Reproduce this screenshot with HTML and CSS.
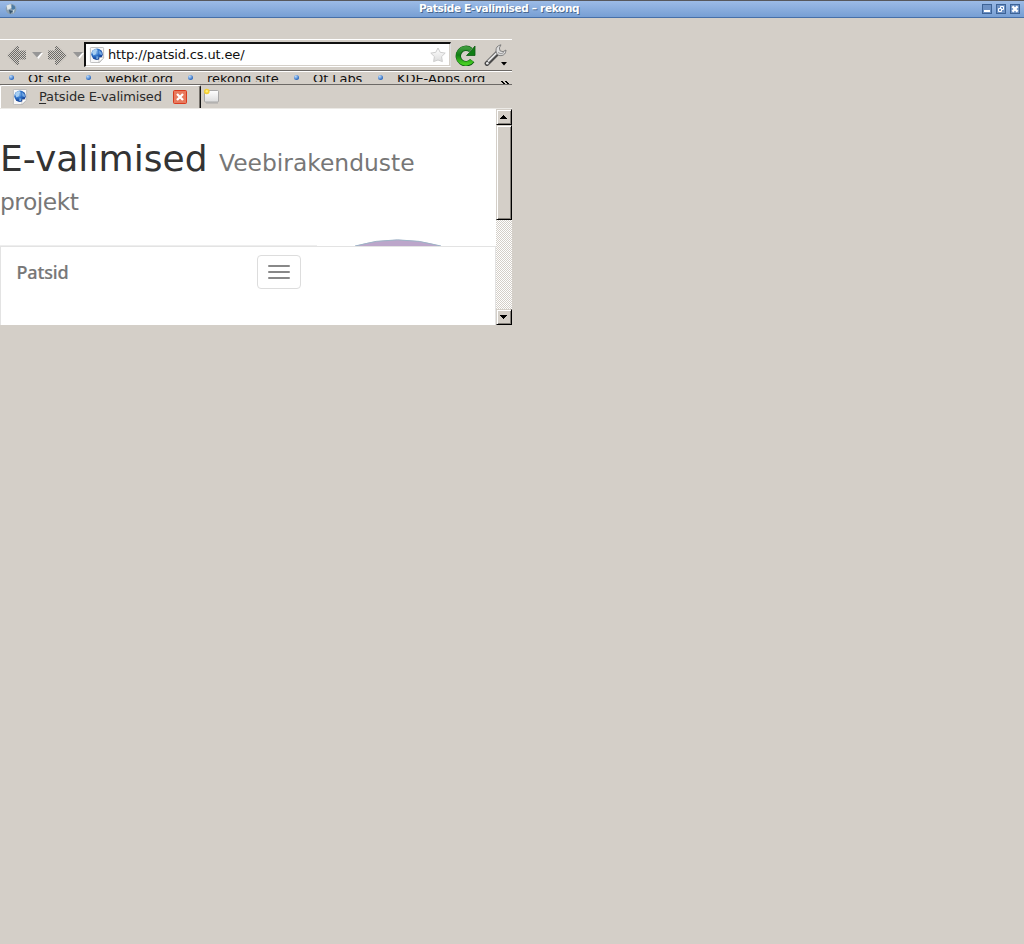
FILE: index.html
```
<!DOCTYPE html>
<html lang="et">
<head>
<meta charset="utf-8">
<title>Patside E-valimised – rekonq</title>
<link rel="stylesheet" href="styles.css">
</head>
<body>
<svg class="defs" width="0" height="0" aria-hidden="true">
  <defs>
    <pattern id="dots" width="2" height="2" patternUnits="userSpaceOnUse"><rect width="2" height="2" fill="#d4cfc8"/><rect width="1" height="1" fill="#6a6a68"/><rect x="1" y="1" width="1" height="1" fill="#6a6a68"/></pattern>
    <radialGradient id="ball" cx=".35" cy=".3" r=".75"><stop offset="0" stop-color="#a9d0f5"/><stop offset=".45" stop-color="#2f73c9"/><stop offset="1" stop-color="#082f86"/></radialGradient>
    <linearGradient id="green" x2="0" y2="1"><stop offset="0" stop-color="#3c9a3c"/><stop offset=".45" stop-color="#0f7c14"/><stop offset="1" stop-color="#45cc22"/></linearGradient>
    <linearGradient id="paper" x2="0" y2="1"><stop offset="0" stop-color="#fff"/><stop offset="1" stop-color="#dcdcdc"/></linearGradient>
    <symbol id="globe" viewBox="0 0 16 16">
      <path d="M2.2.5h11.6a.8.8 0 0 1 .8.8V11l-4 4.5H2.2a.8.8 0 0 1-.8-.8V1.3a.8.8 0 0 1 .8-.8z" fill="#f8f8f8" stroke="#b4b4b4" stroke-width=".8"/>
      <circle cx="8" cy="7.3" r="5.7" fill="url(#ball)"/>
      <path d="M3 5.2Q4 2.3 7.2 2L8.5 3.5 6.8 5 7 7 4.5 8.5z" fill="#a8cff2"/><path d="M10 3.2l2.7 2.4.3 2.6-2.6-.9z" fill="#74aae4"/><path d="M7.5 9l2 .8-.8 2.7-1.5-.6z" fill="#73a9dd"/>
      <path d="M9.6 15.5l.8-5 4.2-.2v.7z" fill="#fff" stroke="#aaa" stroke-width=".5"/>
    </symbol>
    <symbol id="arrow" viewBox="0 0 20 19"><path d="M0 9.5L9.5 0H12v4.5h7v9h-7V19H9.5z" fill="url(#dots)"/></symbol>
  </defs>
</svg>
<header class="titlebar">
  <svg class="app-icon" width="12" height="12" viewBox="0 0 12 12"><circle cx="6" cy="6" r="5.3" fill="#8ba0b2"/><path d="M1.5 2.5l4-1.5 1 4-4 2z" fill="#dfe6e8"/><path d="M7 1.5l3 2v4L6.500 6z" fill="#4b7ba5"/><path d="M4 7l4 1-3 3z" fill="#35556f"/><path d="M8 7l2-1-2 5z" fill="#c7d9df"/></svg>
  <h1 class="title">Patside E-valimised – rekonq</h1>
  <div class="controls">
    <svg width="10" height="10" viewBox="0 0 10 10"><rect x=".5" y=".5" width="9" height="9" fill="#6d91c4" stroke="#3d6396"/><path d="M2 7h6" stroke="#fff" stroke-width="2"/></svg>
    <svg width="10" height="10" viewBox="0 0 10 10"><rect x=".5" y=".5" width="9" height="9" fill="#6d91c4" stroke="#3d6396"/><path d="M4.5 4V2.5h3v3H6M2.5 4.5h3v3h-3z" fill="none" stroke="#fff"/></svg>
    <svg width="10" height="10" viewBox="0 0 10 10"><rect x=".5" y=".5" width="9" height="9" fill="#6d91c4" stroke="#3d6396"/><path d="M2.4 2.4l5.2 5.2M7.6 2.4L2.4 7.6" stroke="#fff" stroke-width="2.2"/></svg>
  </div>
</header>
<div class="window">
  <div class="menu-space"></div>
  <div class="toolbar">
    <svg class="nav-arrow" width="20" height="19"><use href="#arrow"/></svg>
    <svg class="drop" width="11" height="7"><path d="M2 1h9L6.5 7z" fill="#fff"/><path d="M0 0h10L5 5.5z" fill="#969696"/></svg>
    <svg class="nav-arrow forward" width="20" height="19"><use href="#arrow"/></svg>
    <svg class="drop last" width="11" height="7"><path d="M2 1h9L6.5 7z" fill="#fff"/><path d="M0 0h10L5 5.5z" fill="#969696"/></svg>
    <div class="address">
      <svg width="16" height="16"><use href="#globe"/></svg>
      <span class="url">http://patsid.cs.ut.ee/</span>
      <svg class="star" width="16" height="16" viewBox="0 0 16 16"><path d="M8 1l2.2 4.3 5 .8-3.6 3.5.8 5L8 13l-4.4 1.6.8-5L.8 6.1l5-.8z" fill="url(#paper)" stroke="#c8c8c8" stroke-width=".9" stroke-linejoin="round"/></svg>
    </div>
    <svg class="reload" width="21" height="21" viewBox="0 0 21 21"><path d="M17.200 15.600A7.700 7.700 0 1 1 15.800 5" fill="none" stroke="#0c5a13" stroke-width="5.400"/><path d="M20 1v9.500h-8.500l3-3z" fill="#0f7c14" stroke="#0c5a13" stroke-width=".8"/><path d="M17 15.400A7.700 7.700 0 1 1 15.800 5" fill="none" stroke="url(#green)" stroke-width="4.200"/></svg>
    <svg class="wrench" width="24" height="24" viewBox="0 0 24 24"><path d="M3 19.5L13.5 9" stroke="#4a4a4a" stroke-width="4.8" stroke-linecap="round"/><path d="M4 17.5L14 7.6" stroke="#e4e4e4" stroke-width="2"/><path d="M17 .8q-5.500 1.200-5 6.200.5 4.700 5 4.700 4.800-.5 5-5.700l-3 1.700-3-.9-.6-2.900z" fill="#dedede" stroke="#777" stroke-width=".9"/><path d="M14 8.500q3 2.700 6 0" fill="none" stroke="#999"/><circle cx="3.300" cy="19.200" r="1.300" fill="#eee"/><path d="M17 18h6l-3 3.500z" fill="#000"/></svg>
  </div>
  <nav class="bookmarks">
    <span class="bookmark b1"><i></i><b>Qt site</b></span>
    <span class="bookmark b2"><i></i><b>webkit.org</b></span>
    <span class="bookmark b3"><i></i><b>rekonq site</b></span>
    <span class="bookmark b4"><i></i><b>Qt Labs</b></span>
    <span class="bookmark b5"><i></i><b>KDE-Apps.org</b></span>
    <svg class="more" width="9" height="4" viewBox="0 0 9 4" shape-rendering="crispEdges"><path d="M0 0h2v1h1v1h1v1H2V2H1V1H0zM4 0h2v1h1v1h1v1H6V2H5V1H4z"/></svg>
  </nav>
  <div class="tabs">
    <div class="tab">
      <svg width="16" height="16"><use href="#globe"/></svg>
      <span class="tab-label"><u>P</u>atside E-valimised</span>
      <svg class="close" width="14" height="14" viewBox="0 0 14 14"><rect x=".5" y=".5" width="13" height="13" rx="1" fill="#e87a5d" stroke="#d9391d"/><path d="M4 4l6 6M10 4l-6 6" stroke="#fff" stroke-width="2.3"/></svg>
    </div>
    <svg class="new-tab" width="18" height="17" viewBox="0 0 18 17"><rect x="1.5" y="2.5" width="14" height="11.5" rx="1" fill="url(#paper)" stroke="#999" stroke-width=".8"/><path d="M3 15h12" stroke="#aaa"/><circle cx="3.8" cy="3.5" r="2.8" fill="#f5cf32"/><circle cx="3.8" cy="3.2" r="1.2" fill="#fff07a"/></svg>
  </div>
  <div class="view">
    <main class="page">
      <h2 class="heading">
        <span class="line"><span class="name">E-valimised</span><small>Veebirakenduste</small></span>
        <small class="line second">projekt</small>
      </h2>
      <div class="edge"><div class="rule"></div><svg width="90" height="7" viewBox="0 0 90 7"><path d="M2 7Q44-5.3 88 7z" fill="#bca6ca"/><path d="M2 7Q44-5.3 88 7" fill="none" stroke="#9db4c6"/></svg></div>
      <nav class="navbar">
        <span class="brand">Patsid</span>
        <button class="toggle" aria-label="Menu"><i></i><i></i><i></i></button>
      </nav>
    </main>
    <div class="scrollbar">
      <div class="bevel up"><svg width="7" height="4" shape-rendering="crispEdges"><path d="M3 0h1v1h1v1h1v1h1v1H0V3h1V2h1V1h1z"/></svg></div>
      <div class="bevel thumb"></div>
      <div class="track"></div>
      <div class="bevel down"><svg width="7" height="4" shape-rendering="crispEdges"><path d="M3 4h1V3h1V2h1V1h1V0H0v1h1v1h1v1h1z"/></svg></div>
    </div>
  </div>
</div>
</body>
</html>
```
FILE: styles.css
```
* { box-sizing: border-box; }
body { margin: 0; height: 944px; background: #d4cfc8; font: 13px "DejaVu Sans", sans-serif; overflow: hidden; }
svg { display: block; flex: none; }
.defs { position: absolute; }
.titlebar { height: 18px; display: flex; align-items: flex-start; border-top: 1px solid #57585c; border-bottom: 1px solid #4770a8; background: linear-gradient(#9cbbe6, #779fd4); }
.app-icon { margin: 2px 0 0 5px; }
.title { flex: none; width: 166px; margin: 0 0 0 402px; font-size: 10.5px; line-height: 15px; font-weight: bold; letter-spacing: -.33px; color: #fff; text-shadow: 1px 1px 0 #48688f; white-space: nowrap; }
.controls { display: flex; gap: 4px; margin: 3px 4px 0 auto; }
.window { width: 512px; }
.menu-space { height: 22px; border-bottom: 1px solid #fff; }
.toolbar { height: 31px; display: flex; align-items: flex-start; border-bottom: 1px solid #6c6966; }
.nav-arrow { margin: 6px 0 0 7px; }
.drop { margin: 12px 0 0 5px; }
.forward { transform: scaleX(-1); margin-left: 4px; }
.last { margin-left: 6px; }
.address { flex: none; width: 367px; height: 25px; margin: 2px 0 0; display: flex; align-items: center; padding: 0 4px 1px 3px; background: #fff; border-top: 2px solid #111; border-left: 2px solid #111; border-right: 1px solid #ddd; border-bottom: 1px solid #fff; box-shadow: inset -1px -1px #d4cfc8; color: #111; }
.url { margin-left: 3px; white-space: nowrap; letter-spacing: -.15px; }
.star { margin-left: auto; }
.reload { margin: 5px 0 0 4px; }
.wrench { margin: 4px 0 0 8px; }
.bookmarks { height: 14px; display: flex; border-top: 1px solid #fff; border-bottom: 1px solid #6c6966; }
.bookmark { display: flex; flex: none; height: 7px; margin-top: 3px; overflow: hidden; color: #111; }
.bookmark b { font-weight: normal; line-height: 15px; margin-top: -4px; white-space: nowrap; letter-spacing: -.05px; }
.bookmark i { width: 5px; height: 5px; margin: 0 14px 0 9px; border-radius: 50%; background: radial-gradient(circle at 35% 30%, #b9dcff, #2d6abf 70%); }
.b1 { width: 77px; } .b2 { width: 102px; } .b3 { width: 106px; } .b4 { width: 84px; } .b5 { width: 118px; }
.more { margin: 9px 0 0 14px; }
.tabs { height: 24px; display: flex; align-items: flex-start; box-shadow: inset 0 -1px #eceae6; }
.tab { flex: none; width: 201px; height: 23px; display: flex; align-items: center; padding-left: 11px; border-top: 1px solid #fff; border-left: 1px solid #fff; border-right: 1px solid #111; border-radius: 2px 2px 0 0; box-shadow: inset -1px 0 #77736d; }
.tab-label { width: 123px; margin: -2px 0 0 11px; color: #2b2b2b; letter-spacing: -.16px; white-space: nowrap; }
.tab-label u { text-underline-offset: 2px; }
.close { margin-left: 11px; }
.new-tab { margin: 3px 0 0 2px; }
.view { height: 216px; display: flex; }
.page { width: 496px; background: #fff; }
.heading { margin: 0; height: 130px; padding-top: 30px; font-size: 36px; font-weight: normal; color: #333; }
.line { display: flex; align-items: baseline; height: 39px; line-height: 39px; white-space: nowrap; }
.name { width: 219px; letter-spacing: .06px; }
.heading small { font-size: 23.4px; color: #777; }
.second { letter-spacing: -.5px; padding-top: 5px; }
.edge { display: flex; align-items: flex-end; height: 7px; }
.rule { width: 317px; height: 1px; margin-right: 36px; background: #eee; }
.navbar { height: 79px; display: flex; align-items: flex-start; border: 1px solid #e3e3e3; border-bottom: 0; }
.brand { width: 241px; padding-left: .5px; margin-left: 15px; font: 500 18px/50px "Noto Sans", sans-serif; letter-spacing: -.15px; color: #777; -webkit-text-stroke: .2px #777; }
.toggle { width: 44px; height: 34px; margin: 8px 0 0; padding: 9px 10px; display: flex; flex-direction: column; justify-content: flex-start; gap: 4px; background: #fff; border: 1px solid #ddd; border-radius: 4px; }
.toggle i { height: 2px; width: 22px; flex: none; background: #888; border-radius: 1px; }
.scrollbar { width: 16px; display: flex; flex-direction: column; }
.bevel { flex: none; display: flex; align-items: center; justify-content: center; height: 16px; padding-right: 1px; background: #d4cfc8; border: 1px solid; border-color: #d4cfc8 #000 #000 #d4cfc8; box-shadow: inset 1px 1px #fff, inset -1px -1px #85817b; }
.thumb { height: 95px; }
.track { flex: 1; background: repeating-conic-gradient(#fff 0 25%, #d4cfc8 0 50%) 0 0 / 2px 2px; }
```
